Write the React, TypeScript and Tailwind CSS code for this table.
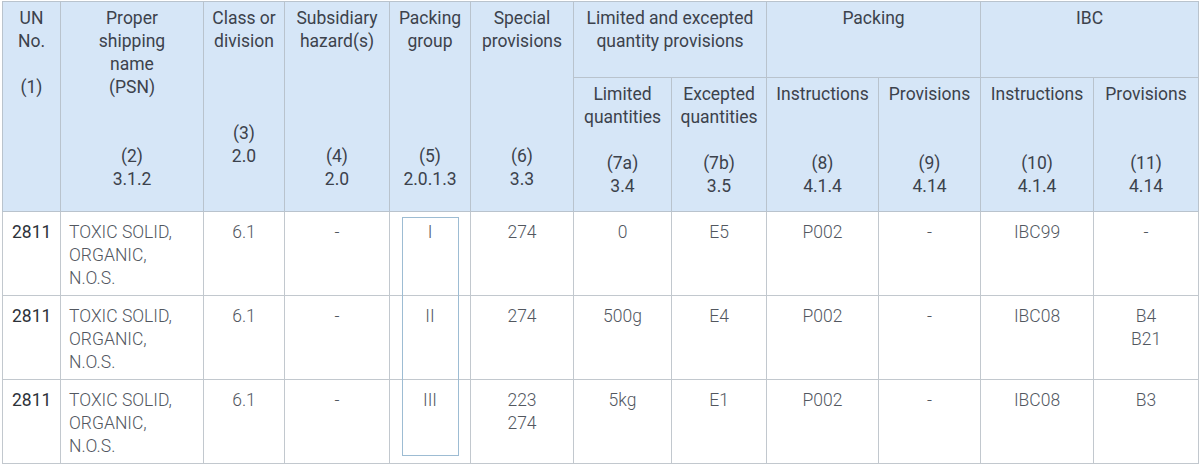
import React from 'react';

type HeadCell = {
  lines: string[];
  rowSpan?: number;
  colSpan?: number;
};

const topRow: HeadCell[] = [
  { lines: ['UN', 'No.', '', '(1)'], rowSpan: 2 },
  { lines: ['Proper', 'shipping', 'name', '(PSN)', '', '', '(2)', '3.1.2'], rowSpan: 2 },
  { lines: ['Class or', 'division', '', '', '', '(3)', '2.0'], rowSpan: 2 },
  { lines: ['Subsidiary', 'hazard(s)', '', '', '', '', '(4)', '2.0'], rowSpan: 2 },
  { lines: ['Packing', 'group', '', '', '', '', '(5)', '2.0.1.3'], rowSpan: 2 },
  { lines: ['Special', 'provisions', '', '', '', '', '(6)', '3.3'], rowSpan: 2 },
  { lines: ['Limited and excepted', 'quantity provisions'], colSpan: 2 },
  { lines: ['Packing'], colSpan: 2 },
  { lines: ['IBC'], colSpan: 2 },
];

const subRow: HeadCell[] = [
  { lines: ['Limited', 'quantities', '', '(7a)', '3.4'] },
  { lines: ['Excepted', 'quantities', '', '(7b)', '3.5'] },
  { lines: ['Instructions', '', '', '(8)', '4.1.4'] },
  { lines: ['Provisions', '', '', '(9)', '4.14'] },
  { lines: ['Instructions', '', '', '(10)', '4.1.4'] },
  { lines: ['Provisions', '', '', '(11)', '4.14'] },
];

const colWidths = [58, 143, 81, 105, 81, 103, 98, 95, 112, 102, 113, 105];

const psn = ['TOXIC SOLID,', 'ORGANIC,', 'N.O.S.'];

const rows: string[][][] = [
  [['2811'], psn, ['6.1'], ['-'], ['I'], ['274'], ['0'], ['E5'], ['P002'], ['-'], ['IBC99'], ['-']],
  [['2811'], psn, ['6.1'], ['-'], ['II'], ['274'], ['500g'], ['E4'], ['P002'], ['-'], ['IBC08'], ['B4', 'B21']],
  [['2811'], psn, ['6.1'], ['-'], ['III'], ['223', '274'], ['5kg'], ['E1'], ['P002'], ['-'], ['IBC08'], ['B3']],
];

const Lines: React.FC<{ lines: string[] }> = ({ lines }) => (
  <>
    {lines.map((l, i) => (
      <div key={i} className="h-[23px] leading-[23px] whitespace-nowrap">
        {l}
      </div>
    ))}
  </>
);

export default function App() {
  return (
    <div
      className="w-[1200px] h-[466px] bg-white"
      style={{ fontFamily: 'Roboto, "Liberation Sans", sans-serif' }}
    >
      <div className="relative ml-[2px] pt-[1px] w-[1197px]">
        <table className="table-fixed border-collapse w-[1197px] text-[17.5px]">
          <colgroup>
            {colWidths.map((w, i) => (
              <col key={i} style={{ width: w }} />
            ))}
          </colgroup>
          <thead className="bg-[#d6e6f7] text-[#3c424c]">
            <tr className="h-[76px]">
              {topRow.map((c, i) => (
                <th
                  key={i}
                  rowSpan={c.rowSpan}
                  colSpan={c.colSpan}
                  className="border border-[#b9c3cd] align-top pt-[5px] px-1 font-normal text-center"
                >
                  <Lines lines={c.lines} />
                </th>
              ))}
            </tr>
            <tr className="h-[134px]">
              {subRow.map((c, i) => (
                <th
                  key={i}
                  className="border border-[#b9c3cd] align-top pt-[5px] px-1 font-normal text-center"
                >
                  <Lines lines={c.lines} />
                </th>
              ))}
            </tr>
          </thead>
          <tbody className="text-[#52575f] font-light">
            {rows.map((r, ri) => (
              <tr key={ri} className="h-[84px]">
                {r.map((cell, ci) => (
                  <td
                    key={ci}
                    className={
                      'border border-[#c2c8ce] align-top pt-[9px] ' +
                      (ci === 0
                        ? 'pl-[9px] text-left text-[#2d3239] font-normal'
                        : ci === 1
                        ? 'pl-[8px] text-left'
                        : 'text-center')
                    }
                  >
                    <Lines lines={cell} />
                  </td>
                ))}
              </tr>
            ))}
          </tbody>
        </table>
        {/* selection outline over the packing group column */}
        <div className="absolute left-[400px] top-[217px] w-[57px] h-[239px] border border-[#9dbcd3] pointer-events-none" />
      </div>
    </div>
  );
}
